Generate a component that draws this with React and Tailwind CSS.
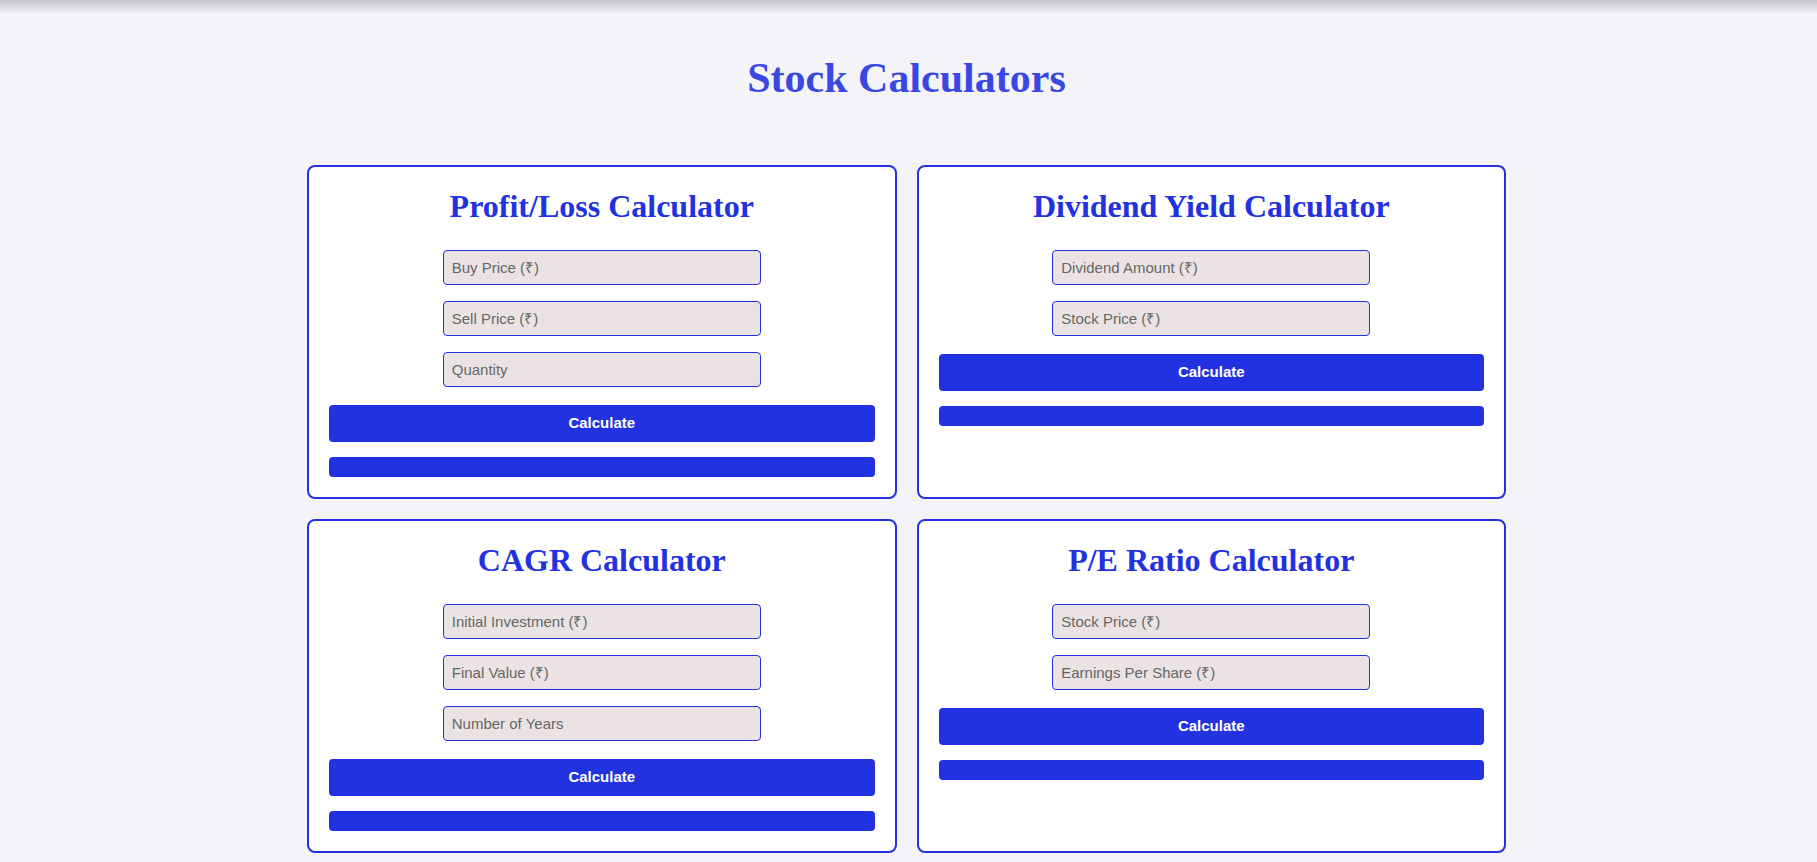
import React from "react";

const cards = [
  { title: "Profit/Loss Calculator", fields: ["Buy Price (₹)", "Sell Price (₹)", "Quantity"] },
  { title: "Dividend Yield Calculator", fields: ["Dividend Amount (₹)", "Stock Price (₹)"] },
  { title: "CAGR Calculator", fields: ["Initial Investment (₹)", "Final Value (₹)", "Number of Years"] },
  { title: "P/E Ratio Calculator", fields: ["Stock Price (₹)", "Earnings Per Share (₹)"] },
];

function Card({ title, fields }) {
  return (
    <div className="flex flex-col rounded-[8px] border-2 border-[#2332e0] bg-white px-[20px] pt-[21px] pb-[20px]">
      <h2
        className="mb-[25px] text-center text-[32px] leading-[37px] font-bold text-[#2332e0]"
        style={{ fontFamily: '"Liberation Serif", "DejaVu Serif", serif' }}
      >
        {title}
      </h2>
      <div className="flex flex-col items-center gap-[16px]">
        {fields.map((f) => (
          <input
            key={f}
            type="text"
            placeholder={f}
            className="h-[35px] w-[318px] rounded-[4px] border border-[#2332e0] bg-[#ebe3e3] px-[8px] text-[15px] text-[#333] outline-none placeholder:text-[#666]"
            style={{ fontFamily: '"Liberation Sans", Arial, sans-serif' }}
          />
        ))}
      </div>
      <button
        className="mt-[18px] h-[37px] w-full rounded-[4px] bg-[#2332e0] text-[15px] font-bold text-white"
        style={{ fontFamily: '"Liberation Sans", Arial, sans-serif' }}
      >
        Calculate
      </button>
      <div className="mt-[15px] h-[20px] w-full rounded-[4px] bg-[#2332e0]"></div>
    </div>
  );
}

export default function App() {
  return (
    <div className="min-h-screen bg-[#f4f4f8] pb-[40px]">
      <div className="h-[14px] bg-gradient-to-b from-[#c6c6cc] to-[#f4f4f8]"></div>
      <div className="pr-[4px]">
        <h1
          className="mt-[40px] text-center text-[42px] leading-[48px] font-bold text-[#3a48e3]"
          style={{ fontFamily: '"Liberation Serif", "DejaVu Serif", serif' }}
        >
          Stock Calculators
        </h1>
        <div className="mx-auto mt-[63px] grid w-[1199px] grid-cols-2 gap-[20px]">
          {cards.map((c) => (
            <Card key={c.title} {...c} />
          ))}
        </div>
      </div>
    </div>
  );
}
